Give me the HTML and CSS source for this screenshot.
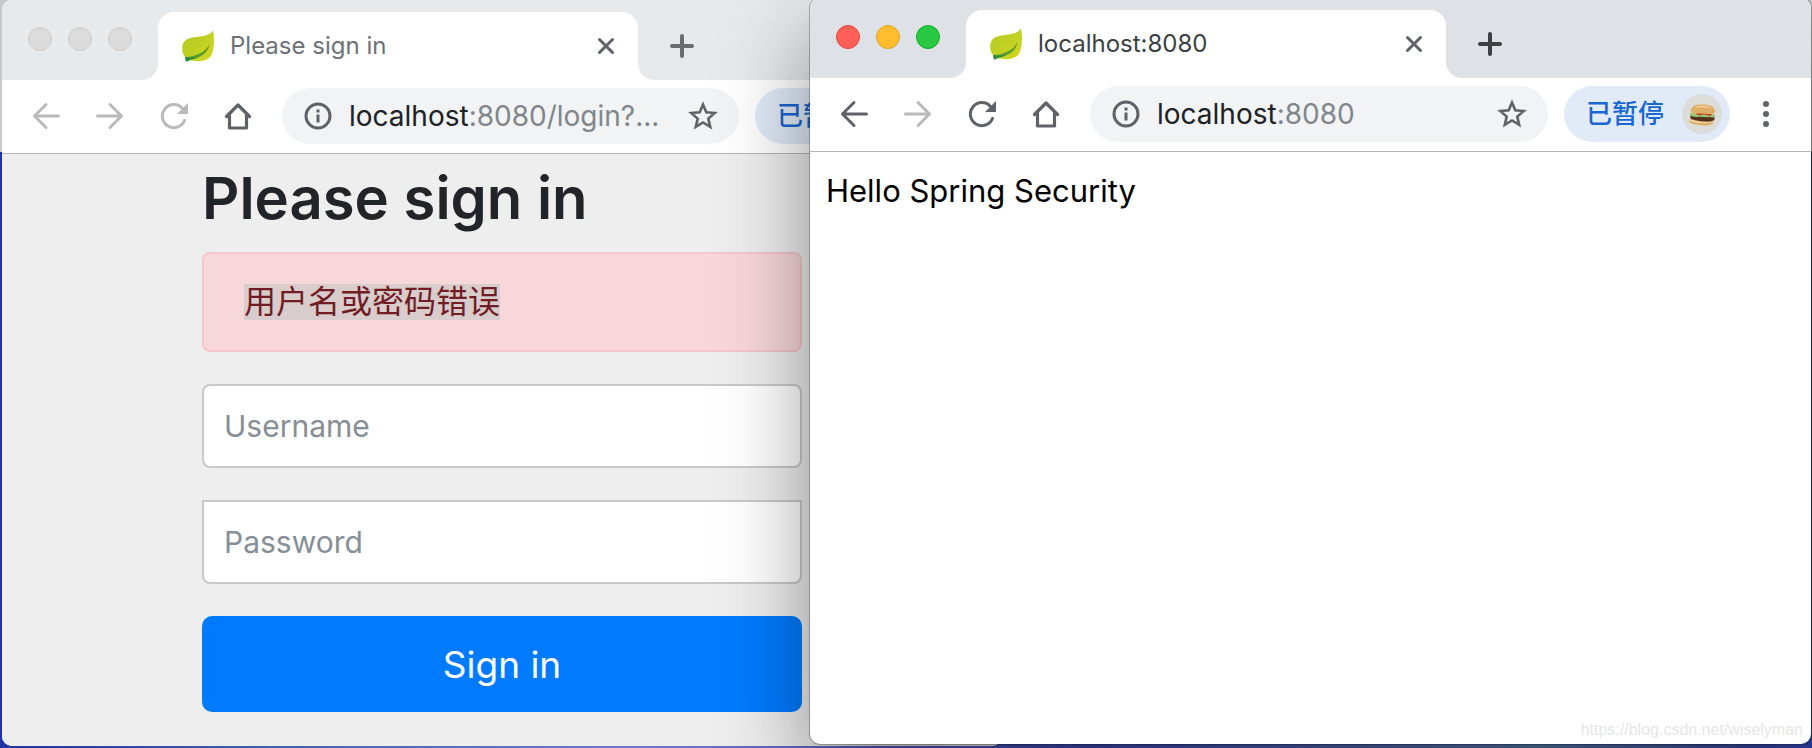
FILE: index.html
```html
<!DOCTYPE html>
<html lang="zh-CN">
<head>
<meta charset="utf-8">
<title>Please sign in</title>
<link rel="stylesheet" href="styles.css">
</head>
<body>
<svg class="defs" aria-hidden="true">
  <defs>
    <linearGradient id="leafFill" x1="0" y1="0" x2="1" y2="1">
      <stop offset="0" stop-color="#b3c920"/><stop offset=".5" stop-color="#c0d024"/><stop offset="1" stop-color="#d3d91c"/>
    </linearGradient>
    <symbol id="leaf" viewBox="0 0 32 32">
      <path d="M31 0.500C32.500 8 32.500 20 29 26C25 32 14 32 7 30L3 27C-1 22 -1 14 4 10C11 5 25 9 31 0.500Z" fill="url(#leafFill)"/>
      <path d="M27.500 14C24 22 14 26.500 3 27L4 31.500C6 31.500 7 30 9 29.500C17 28 26 24 27.500 14Z" fill="#5c9e2e"/>
      <path d="M3 27L4 31.500C6 31.500 7 30 9 29.500C12 29 15 28 17 26.500C12 28 8 28 3 27Z" fill="#2f8a45"/>
    </symbol>
    <symbol id="back" viewBox="0 0 28 28"><path d="M26.500 14H2.500M14 2.500L2.500 14L14 25.500" fill="none" stroke="currentColor" stroke-width="3" stroke-linecap="round" stroke-linejoin="round"/></symbol>
    <symbol id="forward" viewBox="0 0 28 28"><path d="M1.500 14H25.500M14 2.500L25.500 14L14 25.500" fill="none" stroke="currentColor" stroke-width="3" stroke-linecap="round" stroke-linejoin="round"/></symbol>
    <symbol id="reload" viewBox="0 0 28 28"><path d="M24.500 18.500A11.500 11.500 0 1 1 22.500 6.500" fill="none" stroke="currentColor" stroke-width="3" stroke-linecap="round"/><path d="M28 1V12H17Z" fill="currentColor"/></symbol>
    <symbol id="home" viewBox="0 0 28 28"><path d="M2.500 14.500L14 3L25.500 14.500M5.500 13V26H22.500V13" fill="none" stroke="currentColor" stroke-width="3.200" stroke-linecap="round" stroke-linejoin="round"/></symbol>
    <symbol id="info" viewBox="0 0 28 28"><circle cx="14" cy="14" r="12" fill="none" stroke="currentColor" stroke-width="3"/><path d="M14 12.500V20.500M14 7.500V10.500" stroke="currentColor" stroke-width="3"/></symbol>
    <symbol id="star" viewBox="0 0 30 30"><path d="M15 3.500L18.300 11.300L26.700 12L20.300 17.600L22.200 25.800L15 21.500L7.800 25.800L9.700 17.600L3.300 12L11.700 11.300Z" fill="none" stroke="currentColor" stroke-width="2.600"/></symbol>
    <symbol id="close" viewBox="0 0 18 18"><path d="M2.500 2.500L15.500 15.500M15.500 2.500L2.500 15.500" stroke="currentColor" stroke-width="3" stroke-linecap="round"/></symbol>
    <symbol id="plus" viewBox="0 0 24 24"><path d="M12 2V22M2 12H22" stroke="currentColor" stroke-width="4" stroke-linecap="round"/></symbol>
    <symbol id="menu" viewBox="0 0 28 28"><g fill="currentColor"><circle cx="14" cy="4" r="3"/><circle cx="14" cy="14" r="3"/><circle cx="14" cy="24" r="3"/></g></symbol>
    <symbol id="burger" viewBox="0 0 40 40">
      <circle cx="20" cy="20" r="20" fill="#dcdcdb"/>
      <path d="M8 25C6 29 10 30 17 31C25 32 31 32 32 27Z" fill="#dfae66"/>
      <path d="M8 25C12 27 26 29 32 26.500L31 28C24 30 13 29 8 27Z" fill="#f3d6a0"/>
      <path d="M9 21L32 23C34 26 31 27.500 26 27.500C19 28 12 26 9 25C8 24 8 22 9 21Z" fill="#51301c"/>
      <path d="M8 19L33 21C34 24 30 23.500 28 23C24 24 20 22 16 23C11 23 7 22 8 19Z" fill="#93c96f"/>
      <path d="M13 18.500L31 20L28 22L22 20.500L16 21.500Z" fill="#c23a2c"/>
      <path d="M9 16C10 11 15 10 22 10.500C29 11 33 13 33 18C32 21 28 20.500 21 19.500C13 19.500 8 20 9 16Z" fill="#e0ad66"/>
      <path d="M12 14C16 11 25 11 30 14.500C24 13 17 13 12 14Z" fill="#f4d398"/>
    </symbol>
  </defs>
</svg>
<main class="desktop">
  <section class="window window-login" aria-label="Please sign in">
    <header class="tabstrip">
      <div class="lights"><button class="light" aria-label="Close"></button><button class="light" aria-label="Minimize"></button><button class="light" aria-label="Zoom"></button></div>
      <div class="tab">
        <svg class="favicon"><use href="#leaf"/></svg>
        <span class="tab-title">Please sign in</span>
        <button class="icon-button" aria-label="Close tab"><svg class="icon-small"><use href="#close"/></svg></button>
      </div>
      <button class="icon-button new-tab" aria-label="New tab"><svg class="icon-plus"><use href="#plus"/></svg></button>
    </header>
    <nav class="toolbar">
      <div class="nav-buttons">
        <button class="icon-button" disabled aria-label="Back"><svg class="icon"><use href="#back"/></svg></button>
        <button class="icon-button" disabled aria-label="Forward"><svg class="icon"><use href="#forward"/></svg></button>
        <button class="icon-button" disabled aria-label="Reload"><svg class="icon"><use href="#reload"/></svg></button>
        <button class="icon-button" aria-label="Home"><svg class="icon"><use href="#home"/></svg></button>
      </div>
      <div class="address">
        <svg class="icon"><use href="#info"/></svg>
        <span class="url">localhost<span class="url-rest">:8080/login?...</span></span>
        <button class="icon-button" aria-label="Bookmark"><svg class="icon-star"><use href="#star"/></svg></button>
      </div>
      <button class="profile">已暂停<svg class="avatar"><use href="#burger"/></svg></button>
      <button class="icon-button" aria-label="Menu"><svg class="icon"><use href="#menu"/></svg></button>
    </nav>
    <div class="page page-login">
      <form class="signin">
        <h2 class="signin-title">Please sign in</h2>
        <div class="alert" role="alert"><span class="selected">用户名或密码错误</span></div>
        <input class="field" type="text" placeholder="Username" aria-label="Username">
        <input class="field field-password" type="password" placeholder="Password" aria-label="Password">
        <button class="submit" type="submit">Sign in</button>
      </form>
    </div>
  </section>

  <section class="window window-hello" aria-label="localhost:8080">
    <header class="tabstrip">
      <div class="lights"><button class="light light-close" aria-label="Close"></button><button class="light light-min" aria-label="Minimize"></button><button class="light light-zoom" aria-label="Zoom"></button></div>
      <div class="tab">
        <svg class="favicon"><use href="#leaf"/></svg>
        <span class="tab-title">localhost:8080</span>
        <button class="icon-button" aria-label="Close tab"><svg class="icon-small"><use href="#close"/></svg></button>
      </div>
      <button class="icon-button new-tab" aria-label="New tab"><svg class="icon-plus"><use href="#plus"/></svg></button>
    </header>
    <nav class="toolbar">
      <div class="nav-buttons">
        <button class="icon-button" aria-label="Back"><svg class="icon"><use href="#back"/></svg></button>
        <button class="icon-button" disabled aria-label="Forward"><svg class="icon"><use href="#forward"/></svg></button>
        <button class="icon-button" aria-label="Reload"><svg class="icon"><use href="#reload"/></svg></button>
        <button class="icon-button" aria-label="Home"><svg class="icon"><use href="#home"/></svg></button>
      </div>
      <div class="address">
        <svg class="icon"><use href="#info"/></svg>
        <span class="url">localhost<span class="url-rest">:8080</span></span>
        <button class="icon-button" aria-label="Bookmark"><svg class="icon-star"><use href="#star"/></svg></button>
      </div>
      <button class="profile">已暂停<svg class="avatar"><use href="#burger"/></svg></button>
      <button class="icon-button" aria-label="Menu"><svg class="icon"><use href="#menu"/></svg></button>
    </nav>
    <div class="page page-hello">
      <p class="hello">Hello Spring Security</p>
      <p class="watermark">https://blog.csdn.net/wiselyman</p>
    </div>
  </section>
</main>
</body>
</html>
```
FILE: styles.css
```css
* { box-sizing: border-box; }

body {
  margin: 0;
  font-family: Inter, "Noto Sans CJK SC", sans-serif;
}

button {
  padding: 0;
  border: 0;
  background: none;
  color: inherit;
  font: inherit;
}

.defs { position: absolute; width: 0; height: 0; }

.desktop {
  position: relative;
  height: 100vh;
  overflow: hidden;
  background:
    linear-gradient(#c6c8ca, #c6c8ca) 0 0 / 100% 152px no-repeat,
    linear-gradient(90deg, #1f34a6, #4063ac 15%, #6a7ac8 35%, #3c49b4 60%, #5679ad 85%, #2c3fa6);
}

.window {
  position: absolute;
  display: flex;
  flex-direction: column;
  overflow: hidden;
  border-radius: 10px;
  background: #fff;
}

.window-login {
  --strip: #e6eaed;
  --title: #6d7175;
  --plus: #6a6d70;
  inset: 0 810px 2px 2px;
}

.window-hello {
  --strip: #dee1e6;
  --title: #3c4043;
  --plus: #3c4043;
  inset: -2px 1px 4px 810px;
  box-shadow: 0 0 0 1px rgba(0, 0, 0, .25), 0 36px 90px rgba(0, 0, 0, .42);
}

.tabstrip {
  display: flex;
  flex: none;
  height: 80px;
  background: #fff;
  color: #5f6368;
}

.lights {
  display: flex;
  gap: 16px;
  width: 156px;
  padding: 27px 0 0 26px;
  border-radius: 0 0 16px 0;
  background: var(--strip);
}

.light {
  width: 24px;
  height: 24px;
  border: 1px solid #cbcbcb;
  border-radius: 50%;
  background: #dcdcdc;
}

.light-close { border-color: #e2463f; background: #ff5f57; }
.light-min { border-color: #e1a325; background: #ffbd2e; }
.light-zoom { border-color: #17a92c; background: #28c940; }

.tab {
  position: relative;
  display: flex;
  align-items: center;
  width: 480px;
  padding: 0 23px 0 24px;
  margin-top: 12px;
  border-radius: 16px 16px 0 0;
  background: #fff;
  box-shadow: 0 -16px 0 16px var(--strip);
  clip-path: inset(-12px 0 0 0);
}

.favicon { width: 32px; height: 32px; margin-right: 16px; }

.tab-title {
  flex: 1;
  color: var(--title);
  font-size: 24px;
  line-height: 32px;
}

.icon-button { display: grid; place-items: center; }
.icon-button:disabled { color: #bababc; }
.icon { width: 28px; height: 28px; }
.icon-small { width: 18px; height: 18px; }
.icon-star { width: 30px; height: 30px; }
.icon-plus { width: 24px; height: 24px; color: var(--plus); }

.new-tab {
  flex: 1;
  justify-content: start;
  padding: 12px 0 0 32px;
  border-radius: 0 0 0 16px;
  background: var(--strip);
}

.toolbar {
  display: flex;
  flex: none;
  align-items: center;
  gap: 16px;
  height: 74px;
  padding: 0 31px 1px 30px;
  border-bottom: 1px solid #b4b6b8;
  color: #5f6368;
}

.nav-buttons { display: flex; gap: 36px; padding-right: 14px; }

.address {
  display: flex;
  flex: 1;
  align-items: center;
  gap: 17px;
  height: 56px;
  padding: 0 21px 0 22px;
  border-radius: 28px;
  background: #f1f3f4;
}

.url { flex: 1; color: #202124; font-size: 28px; line-height: 36px; white-space: nowrap; }
.url-rest { color: #80868b; }

.profile {
  display: flex;
  align-items: center;
  justify-content: space-between;
  width: 166px;
  height: 56px;
  padding: 0 8px 0 22px;
  margin-right: 6px;
  border-radius: 28px;
  background: #e1ebf8;
  color: #1967d2;
  font-size: 26px;
  font-weight: 500;
  line-height: 36px;
  white-space: nowrap;
}

.avatar { width: 40px; height: 40px; }

.page { flex: 1; }
.page-login { padding: 6px 16px 0; background: #eee; }

.signin {
  display: grid;
  gap: 32px;
  max-width: 600px;
  margin: 0 auto;
}

.signin-title {
  margin: 0 0 -16px;
  color: #212529;
  font-size: 58px;
  font-weight: 600;
  line-height: 76px;
}

.alert {
  padding: 24px 40px;
  border: 2px solid #f5c6cb;
  border-radius: 8px;
  background: #f8d7da;
  color: #721c24;
  font-size: 32px;
  line-height: 48px;
}

.selected {
  display: inline-block;
  background: #d8cccc;
  line-height: 36px;
}

.field {
  width: 100%;
  height: 84px;
  padding: 0 20px;
  border: 2px solid #c9c9c9;
  border-radius: 8px;
  background: #fff;
  color: #495057;
  font-family: inherit;
  font-size: 30px;
}

.field-password { border-radius: 0 0 8px 8px; }
.field::placeholder { color: #868e96; opacity: 1; }

.submit {
  height: 96px;
  border-radius: 10px;
  background: #007bff;
  color: #fff;
  font-size: 37px;
}

.page-hello {
  display: flex;
  flex-direction: column;
  justify-content: space-between;
  padding: 16px 8px 0 16px;
}

.hello { margin: 0; color: #000; font-size: 31px; line-height: 46px; }

.watermark {
  margin: 0;
  color: #e6e6e6;
  font-family: "Liberation Sans", Arial, sans-serif;
  font-size: 16px;
  line-height: 28px;
  text-align: right;
}
```
